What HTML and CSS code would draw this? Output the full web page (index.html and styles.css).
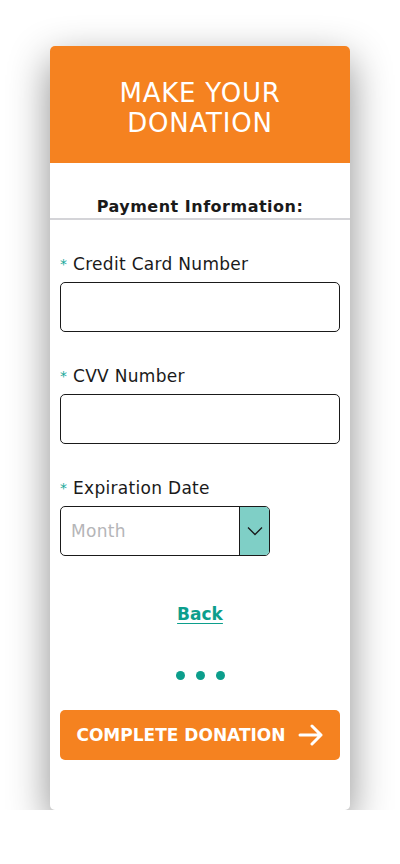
FILE: index.html
```html
<!DOCTYPE html>
<html>
<head>
<meta charset="utf-8">
<link rel="stylesheet" href="styles.css">
</head>
<body>
<div class="card">
  <header class="card-header">
    <h1 class="title">MAKE YOUR<br>DONATION</h1>
  </header>
  <h2 class="section-title">Payment Information:</h2>
  <form class="form">
    <div class="field">
      <label class="label"><span class="req">*</span> Credit Card Number</label>
      <div class="input"></div>
    </div>
    <div class="field">
      <label class="label"><span class="req">*</span> CVV Number</label>
      <div class="input"></div>
    </div>
    <div class="field">
      <label class="label"><span class="req">*</span> Expiration Date</label>
      <div class="select">
        <span class="select-text">Month</span>
        <span class="select-btn">
          <svg width="16" height="10" viewBox="0 0 16 10"><path d="M1 1.5 L8 8.5 L15 1.5" fill="none" stroke="#1a1a1a" stroke-width="1.3"/></svg>
        </span>
      </div>
    </div>
    <a class="back" href="#">Back</a>
    <div class="dots"><span></span><span></span><span></span></div>
    <button type="button" class="submit">COMPLETE DONATION
      <svg width="26" height="22" viewBox="0 0 26 22"><path d="M2 11 H23 M14 2 L23 11 L14 20" fill="none" stroke="#fff" stroke-width="3" stroke-linecap="round" stroke-linejoin="round"/></svg>
    </button>
  </form>
</div>
</body>
</html>
```
FILE: styles.css
```css
html, body { margin: 0; padding: 0; background: #fff; }
body {
  font-family: "DejaVu Sans", "Open Sans", sans-serif;
  color: #1a1a1a;
  padding-top: 46px;
}
.card {
  width: 300px;
  height: 764px;
  margin: 0 auto 0 50px;
  background: #fff;
  border-radius: 5px;
  box-shadow: 0 14px 40px rgba(0,0,0,0.45);
  overflow: hidden;
  display: flex;
  flex-direction: column;
}
.card-header {
  background: #f58220;
  height: 117px;
  flex: none;
  display: flex;
  align-items: center;
  justify-content: center;
}
.title {
  margin: 0;
  padding-top: 7px;
  color: #fff;
  font-weight: 400;
  font-size: 26px;
  line-height: 30px;
  text-align: center;
  letter-spacing: 0.8px;
}
.section-title {
  margin: 34px 0 0;
  height: 20px;
  font-size: 16px;
  font-weight: 700;
  line-height: 20px;
  text-align: center;
  letter-spacing: 0.5px;
  padding-bottom: 1px;
  border-bottom: 2px solid #d4d4d8;
}
.form {
  display: flex;
  flex-direction: column;
  padding: 0 10px;
}
.field {
  display: flex;
  flex-direction: column;
  margin-top: 33px;
}
.label {
  display: block;
  height: 22px;
  font-size: 17px;
  line-height: 22px;
  letter-spacing: 0.3px;
  margin-bottom: 7px;
}
.req { color: #18a89a; font-size: 14px; line-height: 0; vertical-align: 1px; }
.input {
  height: 48px;
  border: 1px solid #1a1a1a;
  border-radius: 5px;
}
.select {
  width: 208px;
  height: 48px;
  border: 1px solid #1a1a1a;
  border-radius: 5px;
  display: flex;
  overflow: hidden;
}
.select-text {
  flex: 1;
  display: flex;
  align-items: center;
  padding-left: 10px;
  color: #b5b5b8;
  font-size: 17px;
  letter-spacing: 0.3px;
}
.select-btn {
  width: 29px;
  background: #7fcfc6;
  border-left: 1px solid #1a1a1a;
  display: flex;
  align-items: center;
  justify-content: center;
}
.back {
  margin-top: 47px;
  height: 22px;
  align-self: center;
  color: #0c9e8c;
  font-weight: 700;
  font-size: 17px;
  line-height: 22px;
  text-decoration: underline;
  text-underline-offset: 3px;
}
.dots {
  margin-top: 46px;
  display: flex;
  justify-content: center;
  gap: 11px;
}
.dots span {
  width: 9px;
  height: 9px;
  border-radius: 50%;
  background: #0c9e8c;
}
.submit {
  margin-top: 30px;
  height: 50px;
  border: none;
  border-radius: 5px;
  background: #f58220;
  color: #fff;
  font-family: inherit;
  font-weight: 600;
  font-size: 17px;
  display: flex;
  align-items: center;
  justify-content: center;
  gap: 12px;
  padding: 0;
}
```
